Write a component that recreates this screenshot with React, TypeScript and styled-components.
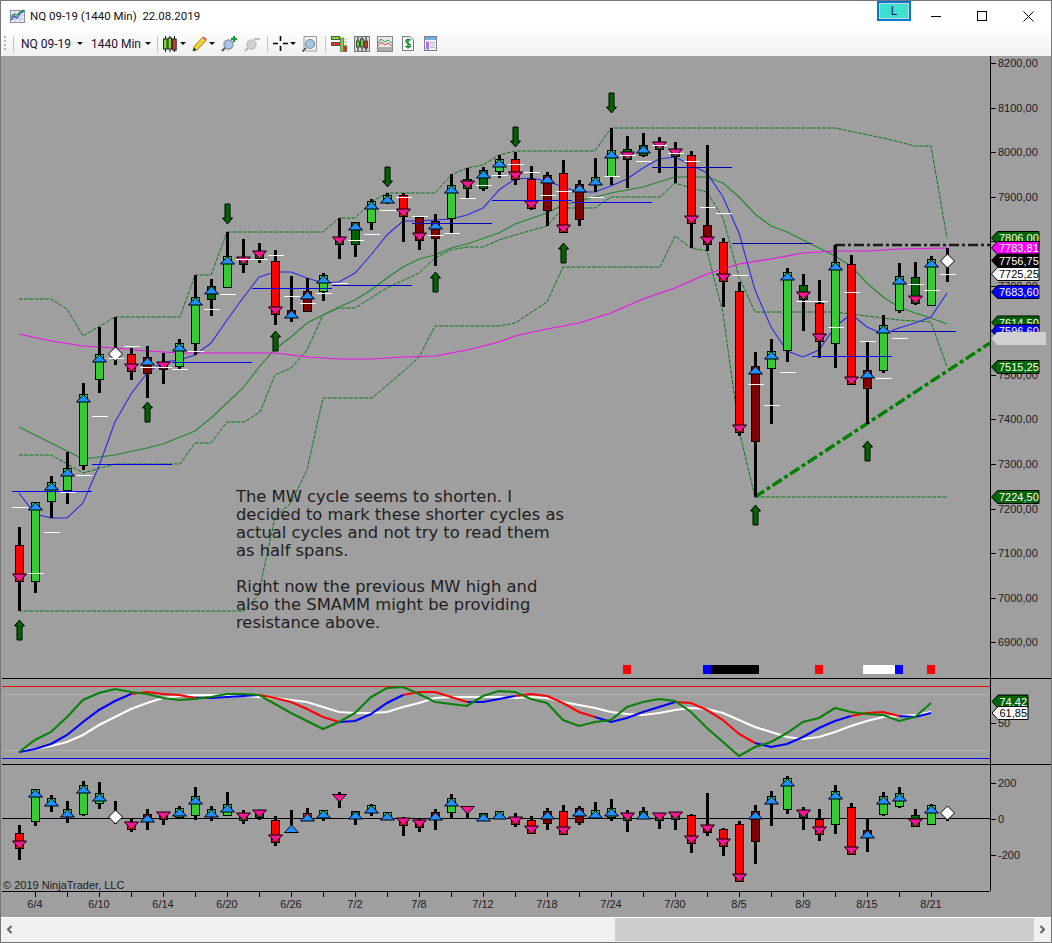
import React from "react";
import styled, { createGlobalStyle } from "styled-components";

const Global = createGlobalStyle`
  html, body { margin: 0; padding: 0; background: #fff; }
  #root { width: 1052px; height: 943px; overflow: hidden; }
`;

const Window = styled.div`
  width: 1052px; height: 943px; box-sizing: border-box;
  border: 1px solid #767676; background: #fff;
  display: flex; flex-direction: column;
  font-family: Roboto, "Noto Sans", sans-serif;
`;
const TitleBar = styled.div`
  height: 30px; display: flex; align-items: center; padding-left: 9px; background: #fff;
`;
const TitleText = styled.span`
  margin-left: 5px; font-size: 11.5px; color: #111; white-space: pre;
`;
const Spacer = styled.div`flex: 1;`;
const LinkButton = styled.div`
  width: 34px; height: 20px; box-sizing: border-box; border: 2px solid #0078d7; align-self: flex-start;
  background: #40e0d0; box-shadow: inset 0 0 0 1px #c8d8d4; display: flex; align-items: center; justify-content: center;
  font-size: 12px; color: #14206a; margin-right: 2px;
`;
const WinCtl = styled.div`
  width: 46px; height: 30px; display: flex; align-items: center; justify-content: center;
`;
const Toolbar = styled.div`
  height: 25px; display: flex; align-items: center; background: linear-gradient(#fdfdfd, #f0f0f0);
  border-bottom-left-radius: 3px; border-bottom-right-radius: 3px;
  font-size: 12px; color: #1a1030;
`;
const Grip = styled.div`
  width: 2px; height: 15px; margin-left: 3px; margin-right: 0;
  background: repeating-linear-gradient(#b5b5b5 0 2px, transparent 2px 4px);
`;
const Sep = styled.div<{ $ml: number }>`
  width: 1px; height: 16px; background: #c4c4c4; margin-left: ${(p) => p.$ml}px;
`;
const ToolLabel = styled.span<{ $ml: number; $w: number }>`
  margin-left: ${(p) => p.$ml}px; white-space: nowrap; width: ${(p) => p.$w}px;
`;
const Caret = styled.i<{ $ml: number }>`
  display: block; margin-left: ${(p) => p.$ml}px; width: 0; height: 0;
  border-left: 3px solid transparent; border-right: 3px solid transparent; border-top: 3px solid #111;
`;
const ToolIcon = styled.svg<{ $ml: number }>`
  display: block; margin-left: ${(p) => p.$ml}px; flex: none;
`;
const ChartArea = styled.div`
  height: 861px; position: relative; background: #9f9f9f; overflow: hidden;
`;
const ChartSvg = styled.svg`
  display: block; width: 1050px; height: 861px;
`;
const AxisText = styled.text`
  font-family: "Liberation Sans", Arial, sans-serif; font-size: 11px; fill: #1c1c24;
`;
const FlagText = styled.text`
  font-family: "Liberation Sans", Arial, sans-serif; font-size: 11px;
`;
const Note = styled.div`
  position: absolute; left: 235px; top: 432px; width: 345px;
  font-family: "DejaVu Sans", Verdana, sans-serif; font-size: 16.35px; line-height: 18px; color: #1e1e1e;
`;
const NoteGap = styled.div`height: 18px;`;
const ScrollGap = styled.div`height: 1px; background: #fff;`;
const ScrollBar = styled.div`
  height: 24px; background: #f0f0f0; display: flex; align-items: stretch; padding-bottom: 1px; box-sizing: border-box;
`;
const ScrollBtn = styled.div`
  width: 17px; display: flex; align-items: center; justify-content: center; flex: none;
`;
const ScrollTrack = styled.div`flex: 1; display: flex; padding-left: 597px;`;
const ScrollThumb = styled.div`flex: 1; background: #cdcdcd;`;

type Bar = [number, number, number, number, string, string];
const main: Bar[] = [
  [527,611,545,582,"r","d"],[502,593,502,582,"g","u"],[476,518,482,502,"g","u"],[452,504,468,491,"g","u"],
  [383,470,394,466,"g","u"],[327,393,354,380,"g","u"],[317,365,0,0,"","D"],[348,380,354,372,"r","d"],
  [346,398,357,374,"R","u"],[353,384,362,370,"R","d"],[339,369,343,367,"g","u"],[275,355,297,344,"g","u"],
  [279,316,286,300,"G","u"],[232,288,256,288,"g","u"],[239,273,258,265,"G","d"],[243,263,253,259,"G","d"],
  [250,325,261,315,"r","d"],[276,322,310,318,"R","u"],[278,312,291,312,"R","u"],[273,301,275,292,"g","u"],
  [218,259,237,245,"G","d"],[222,257,222,245,"G","u"],[199,230,201,223,"g","u"],[193,204,195,203,"g","u"],
  [193,242,195,217,"r","d"],[217,250,217,241,"R","d"],[214,266,221,239,"R","u"],[174,234,185,219,"g","u"],
  [168,198,179,189,"G","d"],[167,191,170,189,"G","u"],[155,178,159,172,"g","u"],[152,185,159,180,"r","d"],
  [166,210,179,209,"r","d"],[172,226,175,211,"R","u"],[160,233,173,233,"r","d"],[180,226,184,220,"R","u"],
  [158,192,177,185,"g","u"],[128,185,150,177,"g","u"],[136,188,149,160,"G","d"],[133,157,145,156,"G","u"],
  [137,173,142,150,"G","d"],[142,183,149,157,"G","d"],[151,248,155,224,"r","d"],[145,251,225,245,"R","d"],
  [238,307,242,282,"r","d"],[282,436,291,433,"r","d"],[352,497,366,442,"R","u"],[339,424,351,369,"g","u"],
  [268,362,272,351,"g","u"],[274,331,285,300,"G","d"],[280,358,303,342,"r","d"],[245,368,262,344,"g","u"],
  [255,385,264,385,"r","d"],[342,424,370,389,"R","u"],[315,373,325,371,"g","u"],[263,313,276,311,"g","u"],
  [262,305,277,304,"G","d"],[256,306,259,306,"g","u"],[248,282,0,0,"","D"],
];
const dashes = [507,573,532,492,475,416,358,346,367,367,369,351,309,294,259,259,255,296,303,293,283,240,234,210,197,216,235,233,198,185,175,164,172,195,191,0,197,176,155,161,145,153,161,207,213,275,384,405,372,301,301,327,292,341,378,338,284,290,274];
const lower: Bar[] = [
  [825,860,833,849,"r","d"],[789,826,789,822,"g","u"],[795,812,798,806,"g","u"],[801,823,809,817,"g","u"],
  [781,816,785,815,"g","u"],[782,809,793,804,"g","u"],[801,824,0,0,"","D2"],[819,832,822,830,"r","d"],
  [809,830,814,822,"R","u"],[813,825,813,820,"R","d"],[806,819,808,818,"g","u"],[787,820,796,816,"g","u"],
  [806,821,809,817,"g","u"],[792,816,804,816,"g","u"],[810,824,814,821,"G","d"],[812,820,812,818,"G","d"],
  [816,846,820,843,"r","d"],[810,825,0,0,"","u2"],[808,821,813,821,"r","u"],[810,821,810,817,"g","u"],
  [792,808,0,0,"","d2"],[811,825,811,819,"G","u"],[804,816,805,813,"g","u"],[812,820,812,819,"g","u"],
  [817,836,818,826,"r","d"],[819,832,820,828,"R","d"],[809,830,812,820,"R","u"],[794,818,798,813,"g","u"],
  [807,818,0,0,"","d3"],[813,819,813,819,"G","u"],[811,819,811,818,"g","u"],[813,827,817,825,"r","d"],
  [816,833,820,834,"r","d"],[808,830,811,824,"R","u"],[805,835,811,835,"r","d"],[806,825,808,823,"R","u"],
  [802,818,810,818,"g","u"],[799,821,808,818,"g","u"],[810,832,813,821,"G","d"],[807,819,811,819,"G","u"],
  [813,829,813,821,"G","d"],[812,830,812,820,"G","d"],[814,853,815,844,"r","d"],[793,836,826,833,"R","d"],
  [828,856,829,847,"r","d"],[821,882,824,882,"r","d"],[805,864,811,842,"R","u"],[791,826,796,803,"g","u"],
  [776,814,778,810,"g","u"],[807,830,811,818,"G","d"],[809,841,819,835,"r","d"],[785,834,791,825,"g","u"],
  [803,855,807,855,"r","d"],[818,852,830,838,"R","u"],[792,816,796,815,"g","u"],[787,808,793,807,"g","u"],
  [809,827,815,827,"G","d"],[804,825,805,825,"g","u"],[809,821,0,0,"","D3"],
];

const colors: Record<string, string> = { r: "#ff0000", g: "#32cd32", G: "#006400", R: "#800000" };
const cx = (i: number) => 19.5 + 16 * i;
const pts = (a: number[][]) => a.map((p) => p.join(",")).join(" ");

const blue = [[19,493],[35,514],[51,518],[67,518],[83,503],[99,466],[115,422],[131,394],[147,373],[163,362],[179,360],[195,355],[211,343],[227,320],[243,298],[259,277],[275,272],[291,272],[307,278],[323,283],[339,282],[355,273],[371,255],[387,235],[403,221],[419,221],[435,220],[451,219],[467,215],[483,208],[499,190],[515,179],[531,178],[547,181],[563,187],[579,192],[595,192],[611,186],[627,179],[643,168],[659,159],[675,157],[691,165],[707,173],[723,197],[739,233],[755,290],[771,327],[787,351],[803,357],[819,350],[835,327],[851,314],[867,327],[883,334],[899,328],[915,323],[931,317],[947,293]];
const magenta = [[19,334],[51,341],[83,346],[115,348],[147,351],[179,353],[211,353],[243,353],[275,353],[307,357],[339,359],[371,359],[403,357],[435,356],[467,350],[499,342],[515,336],[547,329],[579,323],[611,313],[643,299],[675,288],[707,274],[739,264],[771,259],[803,253],[835,251],[867,251],[899,249],[947,248]];
const greenSolid = [[19,427],[51,443],[83,459],[115,455],[147,448],[163,444],[195,431],[211,418],[243,388],[259,367],[275,349],[291,337],[307,323],[323,315],[339,307],[355,300],[371,290],[387,278],[403,267],[419,259],[435,255],[451,248],[467,244],[499,233],[515,224],[547,213],[563,205],[595,197],[611,193],[643,187],[675,177],[707,177],[723,183],[739,197],[755,214],[771,226],[787,232],[811,244],[835,256],[851,266],[867,283],[883,297],[899,307],[915,313],[931,318],[947,324]];
const dashUpper = [[19,299],[51,299],[67,309],[83,336],[115,317],[180,317],[195,275],[211,275],[227,232],[323,232],[339,218],[355,218],[371,202],[387,193],[403,193],[435,193],[451,175],[467,168],[483,165],[499,155],[515,151],[595,151],[611,128],[835,128],[883,138],[915,146],[931,146],[947,238]];
const dashMid = [[19,455],[51,455],[83,473],[115,464],[180,464],[195,443],[211,443],[227,422],[244,422],[260,412],[275,375],[291,368],[307,350],[323,315],[339,308],[355,308],[387,288],[419,273],[435,258],[451,250],[467,247],[483,247],[499,240],[515,235],[547,226],[563,208],[595,208],[611,197],[660,197],[675,183],[691,188],[707,192],[723,218],[739,277],[755,312],[835,312],[867,316],[899,320],[931,322],[947,367]];
const dashLow = [[19,611],[244,611],[259,594],[263,573],[275,517],[291,503],[307,470],[323,398],[372,398],[405,370],[419,357],[435,326],[499,326],[515,323],[547,302],[563,267],[660,267],[675,236],[691,248],[707,251],[723,313],[739,430],[755,497],[947,497]];
const hLines: [number, number, number, string][] = [
  [12,92,491,"#0000f0"],[92,172,464,"#0000f0"],[172,252,362,"#0000f0"],[252,332,288,"#0000e0"],[332,412,285,"#0000c0"],
  [412,492,223,"#0000c0"],[492,572,200,"#0000f0"],[572,652,202,"#0000f0"],[652,732,167,"#0000b0"],[732,812,243,"#0000a0"],
  [812,892,356,"#0000f0"],[892,956,331,"#0000b0"],
];
const whiteOsc = [[19,751],[35,749],[51,746],[67,742],[83,735],[99,725],[115,717],[131,709],[147,703],[163,698],[179,696],[195,695],[211,695],[227,696],[243,696],[259,697],[275,698],[291,700],[307,702],[323,707],[339,712],[355,713],[371,713],[387,712],[403,707],[419,703],[435,698],[451,697],[467,697],[483,697],[499,697],[515,698],[531,697],[547,698],[563,702],[579,705],[595,708],[611,712],[627,714],[643,715],[659,713],[675,710],[691,708],[707,709],[723,713],[739,720],[755,727],[771,732],[787,737],[803,739],[819,737],[835,732],[851,726],[867,721],[883,717],[899,716],[915,715],[931,712]];
const greenOsc = [[19,752],[35,740],[51,732],[67,717],[83,700],[99,693],[115,689],[131,692],[147,694],[163,698],[179,700],[195,699],[211,697],[227,694],[243,694],[259,695],[275,704],[291,713],[307,721],[323,729],[339,722],[355,713],[371,697],[387,688],[403,687],[419,694],[435,702],[451,704],[467,706],[483,696],[499,691],[515,692],[531,699],[547,703],[563,720],[579,726],[595,722],[611,720],[627,707],[643,702],[659,699],[675,701],[691,712],[707,728],[723,742],[739,756],[755,747],[771,742],[787,733],[803,722],[819,718],[835,708],[851,712],[867,714],[883,715],[899,721],[915,717],[931,703]];
const oscSegs: [string, number[][]][] = [
  ["#0000ff",[[19,752],[35,749],[51,744],[67,735],[83,722],[99,710],[115,701],[131,694]]],
  ["#ff0000",[[131,694],[147,692],[163,694],[179,695],[195,698]]],
  ["#0000ff",[[195,698],[211,698],[227,697],[243,696],[259,695]]],
  ["#ff0000",[[259,695],[275,698],[291,702],[307,709],[323,717],[339,722]]],
  ["#0000ff",[[339,722],[355,721],[371,714],[387,703],[403,695]]],
  ["#ff0000",[[403,695],[419,692],[435,692],[451,697],[467,702]]],
  ["#0000ff",[[467,702],[483,702],[499,699],[515,696]]],
  ["#ff0000",[[515,696],[531,694],[547,696],[563,703],[579,712],[595,717]]],
  ["#0000ff",[[595,717],[611,722],[627,718],[643,712],[659,707],[675,702]]],
  ["#ff0000",[[675,702],[691,703],[707,710],[723,720],[739,734],[755,743]]],
  ["#0000ff",[[755,743],[771,747],[787,744],[803,737],[819,728],[835,721],[851,716]]],
  ["#ff0000",[[851,716],[867,713],[883,712],[899,716]]],
  ["#0000ff",[[899,716],[915,717],[931,713]]],
];
const arrows: [number, number, boolean][] = [
  [227,204,false],[387,167,false],[515,127,false],[611,93,false],
  [19,620,true],[147,402,true],[275,331,true],[435,272,true],[563,243,true],[755,505,true],[867,441,true],
];

const UpTri = ({ x, y }: { x: number; y: number }) => (
  <polygon points={`${x},${y} ${x + 7},${y + 7.5} ${x - 7},${y + 7.5}`} fill="#1e90ff" stroke="#000" strokeWidth="1" />
);
const DownTri = ({ x, y }: { x: number; y: number }) => (
  <polygon points={`${x - 7},${y - 7.5} ${x + 7},${y - 7.5} ${x},${y}`} fill="#ff1493" stroke="#000" strokeWidth="1" />
);
const Diamond = ({ x, y }: { x: number; y: number }) => (
  <polygon points={`${x},${y - 7} ${x + 7},${y} ${x},${y + 7} ${x - 7},${y}`} fill="#fff" stroke="#000" strokeWidth="1" />
);

const Candle = ({ bar, i }: { bar: Bar; i: number }) => {
  const [wt, wb, bt, bb, c, m] = bar;
  const x = cx(i);
  return (
    <g>
      <rect x={x - 1.5} y={wt} width="3" height={wb - wt} fill="#000" shapeRendering="crispEdges" />
      {bt > 0 && bb > bt && (
        <rect x={x - 4} y={bt + 0.5} width="8" height={bb - bt - 1} fill={colors[c]} stroke="#000" shapeRendering="crispEdges" />
      )}
      {m === "u" && <UpTri x={x} y={bt + 0.5} />}
      {m === "d" && <DownTri x={x} y={bb - 0.5} />}
      {m === "D" && <Diamond x={x} y={i === 6 ? 354 : 261} />}
      {m === "D2" && <Diamond x={x} y={817} />}
      {m === "D3" && <Diamond x={x} y={813} />}
      {m === "u2" && <UpTri x={x} y={825} />}
      {m === "d2" && <DownTri x={x} y={802} />}
      {m === "d3" && <DownTri x={x} y={814} />}
    </g>
  );
};

const Arrow = ({ x, y, up }: { x: number; y: number; up: boolean }) => {
  const c = x + 0.5;
  const p = up
    ? `${c},${y} ${c + 5},${y + 6} ${c + 2.5},${y + 6} ${c + 2.5},${y + 20} ${c - 2.5},${y + 20} ${c - 2.5},${y + 6} ${c - 5},${y + 6}`
    : `${c - 2.5},${y} ${c + 2.5},${y} ${c + 2.5},${y + 14} ${c + 5},${y + 14} ${c},${y + 20} ${c - 5},${y + 14} ${c - 2.5},${y + 14}`;
  return <polygon points={p} fill="#006400" stroke="#000" strokeWidth="1" />;
};

const Flag = ({ y, text, bg, fg, right = 1039, tip = 991.5 }: { y: number; text: string; bg: string; fg: string; right?: number; tip?: number }) => (
  <g>
    <polygon points={`${tip},${y} ${tip + 6},${y - 6.5} ${right},${y - 6.5} ${right},${y + 6.5} ${tip + 6},${y + 6.5}`} fill={bg} stroke="#000" strokeWidth="1" />
    <FlagText x={tip + 7.5} y={y + 4} fill={fg}>{text}</FlagText>
  </g>
);

const priceY = (p: number) => 63 + ((8200 - p) / 100) * 44.55;
const prices = [8200,8100,8000,7900,7800,7700,7600,7500,7400,7300,7200,7100,7000,6900];
const dates = ["6/4","6/10","6/14","6/20","6/26","7/2","7/8","7/12","7/18","7/24","7/30","8/5","8/9","8/15","8/21"];
const markers: [number, number, string][] = [[623,8,"#f00"],[703,8,"#00f"],[711,48,"#000"],[815,8,"#f00"],[863,32,"#fff"],[895,8,"#00f"],[927,8,"#f00"]];

const Chart = () => (
  <ChartSvg viewBox="1 56 1050 861">
    {/* thin bands and averages */}
    <polyline points={pts(dashUpper)} fill="none" stroke="#0d7a18" strokeDasharray="4 1.2" />
    <polyline points={pts(dashMid)} fill="none" stroke="#0d7a18" strokeDasharray="4 1.2" />
    <polyline points={pts(dashLow)} fill="none" stroke="#0d7a18" strokeDasharray="4 1.2" />
    <polyline points={pts(greenSolid)} fill="none" stroke="#1f8a2a" strokeWidth="1.1" />
    <polyline points={pts(magenta)} fill="none" stroke="#f010e8" strokeWidth="1.2" />
    <polyline points={pts(blue)} fill="none" stroke="#2a2ae8" strokeWidth="1.1" />

    {/* reference lines */}
    <path d="M835 262V245" stroke="#000" strokeWidth="3" />
    <line x1="835" y1="245" x2="990" y2="245" stroke="#1c1c1c" strokeWidth="2.5" strokeDasharray="10 3 3 3" />
    <line x1="755" y1="497" x2="990" y2="343" stroke="#008000" strokeWidth="3.5" strokeDasharray="11 3 4 3" />

    {main.map((b, i) => <Candle key={i} bar={b} i={i} />)}
    {hLines.map(([a, b, y, c], i) => <line key={i} x1={a} x2={b} y1={y + 0.5} y2={y + 0.5} stroke={c} shapeRendering="crispEdges" />)}
    {dashes.map((y, i) => y > 0 && <line key={i} x1={12 + 16 * i} x2={28 + 16 * i} y1={y + 0.5} y2={y + 0.5} stroke="#fff" shapeRendering="crispEdges" />)}
    {arrows.map(([x, y, up], i) => <Arrow key={i} x={x} y={y} up={up} />)}
    {markers.map(([x, w, c], i) => <rect key={i} x={x} y={665} width={w} height={9} fill={c} />)}

    {/* oscillator panel */}
    <line x1="2" x2="1052" y1="678.5" y2="678.5" stroke="#000" shapeRendering="crispEdges" />
    <line x1="2" x2="990" y1="686.5" y2="686.5" stroke="#ff0000" shapeRendering="crispEdges" />
    <line x1="2" x2="990" y1="694.5" y2="694.5" stroke="#b2b2b2" shapeRendering="crispEdges" />
    <line x1="2" x2="990" y1="750.5" y2="750.5" stroke="#b2b2b2" shapeRendering="crispEdges" />
    <line x1="2" x2="990" y1="758.5" y2="758.5" stroke="#0000ff" shapeRendering="crispEdges" />
    <polyline points={pts(whiteOsc)} fill="none" stroke="#fff" strokeWidth="2.1" />
    {oscSegs.map(([c, a], i) => <polyline key={i} points={pts(a)} fill="none" stroke={c} strokeWidth="2.1" />)}
    <polyline points={pts(greenOsc)} fill="none" stroke="#0a800a" strokeWidth="2.1" />
    <line x1="2" x2="1052" y1="764.5" y2="764.5" stroke="#000" shapeRendering="crispEdges" />

    {/* lower histogram panel */}
    <line x1="2" x2="990" y1="818.5" y2="818.5" stroke="#000" shapeRendering="crispEdges" />
    {lower.map((b, i) => <Candle key={i} bar={b} i={i} />)}
    <AxisText x="3" y="889">© 2019 NinjaTrader, LLC</AxisText>

    {/* axes */}
    <line x1="990.5" x2="990.5" y1="56" y2="891" stroke="#000" shapeRendering="crispEdges" />
    <line x1="2" x2="990" y1="891.5" y2="891.5" stroke="#000" shapeRendering="crispEdges" />
    {prices.map((p) => (
      <g key={p}>
        <line x1="990" x2="996" y1={Math.round(priceY(p)) + 0.5} y2={Math.round(priceY(p)) + 0.5} stroke="#000" shapeRendering="crispEdges" />
        <AxisText x="998" y={priceY(p) + 4}>{p},00</AxisText>
      </g>
    ))}
    {[[723,"50"],[783,"200"],[819,"0"],[855,"-200"]].map(([y, t]) => (
      <g key={t as string}>
        <line x1="990" x2="996" y1={(y as number) + 0.5} y2={(y as number) + 0.5} stroke="#000" shapeRendering="crispEdges" />
        <AxisText x="998" y={(y as number) + 4}>{t}</AxisText>
      </g>
    ))}
    {Array.from({ length: 30 }, (_, k) => 35 + 32 * k).filter((x) => x < 960).map((x) => (
      <line key={x} x1={x} x2={x} y1="892" y2="897" stroke="#000" shapeRendering="crispEdges" />
    ))}
    {dates.map((d, k) => <AxisText key={d} x={35 + 64 * k} y="908" textAnchor="middle">{d}</AxisText>)}

    {/* price flags */}
    <Flag y={238} text="7806,00" bg="#006400" fg="#fff" />
    <Flag y={248} text="7783,81" bg="#ff00ff" fg="#fff" />
    <Flag y={260.5} text="7756,75" bg="#000" fg="#fff" />
    <Flag y={274} text="7725,25" bg="#fff" fg="#000" />
    <Flag y={292} text="7683,60" bg="#0000ff" fg="#fff" />
    <Flag y={322.5} text="7614,50" bg="#006400" fg="#fff" />
    <Flag y={331} text="7596,60" bg="#0000ff" fg="#fff" />
    <polygon points="991.5,338.5 997,332 1046,332 1046,345 997,345" fill="#d0d0d0" />
    <Flag y={367} text="7515,25" bg="#006400" fg="#fff" />
    <Flag y={497} text="7224,50" bg="#006400" fg="#fff" />
    <Flag y={701.5} text="74,42" bg="#006400" fg="#fff" right={1028} tip={992} />
    <Flag y={713} text="61,85" bg="#fff" fg="#000" right={1028} tip={992} />
  </ChartSvg>
);

const TitleIcon = () => (
  <svg width="15" height="15" viewBox="0 0 15 15">
    <rect x="0.5" y="1.5" width="14" height="12" fill="#e6e8f2" stroke="#8a8fa8" />
    <path d="M1 6H14M1 10H14M5 2V13M10 2V13" stroke="#c0c4d8" />
    <path d="M1 11L4 7L7 9L10 4L14 2" fill="none" stroke="#2a5bc0" strokeWidth="1.4" />
    <path d="M1 8L4 5L7 6L10 3L14 1" fill="none" stroke="#30a050" strokeWidth="1.2" />
  </svg>
);
const IconCandles = ({ $ml }: { $ml: number }) => (
  <ToolIcon $ml={$ml} width="14" height="16" viewBox="0 0 14 16">
    <path d="M2.5 0V16M7 0V16M11.5 0V16" stroke="#111" />
    <rect x="0.5" y="3" width="3.6" height="10" fill="#7edb2e" stroke="#222" />
    <rect x="5" y="2" width="3.6" height="11" fill="#7edb2e" stroke="#222" />
    <rect x="9.6" y="3" width="3.6" height="11" fill="#e8362a" stroke="#222" />
  </ToolIcon>
);
const IconPencil = ({ $ml }: { $ml: number }) => (
  <ToolIcon $ml={$ml} width="15" height="16" viewBox="0 0 15 16">
    <path d="M1 15L2 10.5L10.5 1.5L14 4.8L5.3 13.8Z" fill="#f3d03a" stroke="#8a7a20" strokeWidth="0.8" />
    <path d="M10.5 1.5L12 0.4L15 3.5L14 4.8Z" fill="#e05a6a" />
    <path d="M1 15L2 11.5L4.5 14Z" fill="#222" />
  </ToolIcon>
);
const IconZoomIn = ({ $ml }: { $ml: number }) => (
  <ToolIcon $ml={$ml} width="17" height="16" viewBox="0 0 17 16">
    <line x1="1" y1="15" x2="5" y2="11" stroke="#555" strokeWidth="2" />
    <circle cx="7.5" cy="8.5" r="4.5" fill="#a8c8ec" stroke="#8a95a5" strokeWidth="1.4" />
    <path d="M13 0V6M10 3H16" stroke="#10a030" strokeWidth="2.2" />
  </ToolIcon>
);
const IconZoomOut = ({ $ml }: { $ml: number }) => (
  <ToolIcon $ml={$ml} width="17" height="16" viewBox="0 0 17 16">
    <line x1="1" y1="15" x2="5" y2="11" stroke="#b5b5b5" strokeWidth="2" />
    <circle cx="7.5" cy="8.5" r="4.5" fill="#d2d2d2" stroke="#c2c2c2" strokeWidth="1.4" />
    <path d="M10 3H16" stroke="#bdbdbd" strokeWidth="2" />
  </ToolIcon>
);
const IconCross = ({ $ml }: { $ml: number }) => (
  <ToolIcon $ml={$ml} width="15" height="15" viewBox="0 0 15 15">
    <path d="M0 7.5H5M10 7.5H15M7.5 0V5M7.5 10V15" stroke="#000" strokeWidth="1.6" />
  </ToolIcon>
);
const IconMag = ({ $ml }: { $ml: number }) => (
  <ToolIcon $ml={$ml} width="15" height="16" viewBox="0 0 15 16">
    <path d="M2 13V0.5H14.5V15H3" fill="#f2f2f2" stroke="#9a9a9a" />
    <line x1="0.5" y1="15.5" x2="4" y2="12" stroke="#444" strokeWidth="1.6" />
    <circle cx="8" cy="8" r="4.5" fill="#a5c5e8" stroke="#7f8ea0" strokeWidth="1.2" />
  </ToolIcon>
);
const IconBars = ({ $ml }: { $ml: number }) => (
  <ToolIcon $ml={$ml} width="16" height="16" viewBox="0 0 16 16">
    <path d="M11 3H16M11 6H16M11 9H16M12 12H16" stroke="#bbb" />
    <rect x="0.5" y="0.5" width="8" height="3" fill="#7edb2e" stroke="#555" />
    <rect x="0.5" y="6.5" width="8" height="3" fill="#e0302a" stroke="#555" />
    <rect x="9.5" y="2" width="3" height="13.5" fill="#7edb2e" stroke="#555" strokeWidth="0.7" />
    <rect x="13" y="10" width="3" height="5.5" fill="#e0302a" stroke="#555" strokeWidth="0.7" />
  </ToolIcon>
);
const IconBox = ({ $ml }: { $ml: number }) => (
  <ToolIcon $ml={$ml} width="16" height="16" viewBox="0 0 16 16">
    <rect x="0.5" y="0.5" width="15" height="15" fill="#d8d8d8" stroke="#777" />
    <path d="M4 1V15M8 1V15M12 1V15" stroke="#222" />
    <rect x="2.5" y="5" width="3" height="6" fill="#60d030" stroke="#222" strokeWidth="0.7" />
    <rect x="6.5" y="3" width="3" height="8" fill="#60d030" stroke="#222" strokeWidth="0.7" />
    <rect x="10.5" y="5" width="3" height="7" fill="#e0302a" stroke="#222" strokeWidth="0.7" />
  </ToolIcon>
);
const IconLines = ({ $ml }: { $ml: number }) => (
  <ToolIcon $ml={$ml} width="16" height="16" viewBox="0 0 16 16">
    <rect x="0.5" y="0.5" width="15" height="15" fill="#e8eae8" stroke="#888" />
    <rect x="1" y="11" width="14" height="4" fill="#aaa" />
    <path d="M1 7L4 3L8 6L11 4L15 7" fill="none" stroke="#2aa050" />
    <path d="M1 10L4 6L8 9L11 7L15 10" fill="none" stroke="#d04040" />
  </ToolIcon>
);
const IconDollar = ({ $ml }: { $ml: number }) => (
  <ToolIcon $ml={$ml} width="12" height="15" viewBox="0 0 12 15">
    <path d="M0.5 0.5H8L11.5 4V14.5H0.5Z" fill="#fdfdfd" stroke="#777" />
    <path d="M8.5 4.5C8 3.2 4 3 4 5.5C4 8 8.5 6.8 8.5 9.5C8.5 12 4.2 11.5 3.5 10.2M6 2.5V12.5" fill="none" stroke="#1a8a30" strokeWidth="1.5" />
  </ToolIcon>
);
const IconForm = ({ $ml }: { $ml: number }) => (
  <ToolIcon $ml={$ml} width="13" height="15" viewBox="0 0 13 15">
    <rect x="0.5" y="0.5" width="12" height="14" fill="#f0f2f8" stroke="#7a7f90" />
    <rect x="1" y="1" width="11" height="3" fill="#6fb0e0" />
    <rect x="2" y="5.5" width="3" height="8" fill="#b070f0" />
    <path d="M6 6.5H11M6 9H11M6 11.5H11" stroke="#b0b4c4" />
  </ToolIcon>
);

export default function App() {
  return (
    <>
      <Global />
      <Window>
        <TitleBar>
          <TitleIcon />
          <TitleText>NQ 09-19 (1440 Min)  22.08.2019</TitleText>
          <Spacer />
          <LinkButton>L</LinkButton>
          <WinCtl><svg width="10" height="10"><path d="M0 5.5H10" stroke="#000" /></svg></WinCtl>
          <WinCtl><svg width="10" height="10"><rect x="0.5" y="0.5" width="9" height="9" fill="none" stroke="#000" /></svg></WinCtl>
          <WinCtl><svg width="11" height="11"><path d="M0.5 0.5L10.5 10.5M10.5 0.5L0.5 10.5" stroke="#000" /></svg></WinCtl>
        </TitleBar>
        <Toolbar>
          <Grip />
          <Sep $ml={7} />
          <ToolLabel $ml={7} $w={50}>NQ 09-19</ToolLabel>
          <Caret $ml={6} />
          <ToolLabel $ml={8} $w={48}>1440 Min</ToolLabel>
          <Caret $ml={6} />
          <Sep $ml={6} />
          <IconCandles $ml={5} />
          <Caret $ml={3} />
          <IconPencil $ml={6} />
          <Caret $ml={2} />
          <IconZoomIn $ml={6} />
          <IconZoomOut $ml={6} />
          <Sep $ml={6} />
          <IconCross $ml={5} />
          <Caret $ml={2} />
          <IconMag $ml={6} />
          <Sep $ml={8} />
          <IconBars $ml={5} />
          <IconBox $ml={7} />
          <IconLines $ml={7} />
          <IconDollar $ml={9} />
          <IconForm $ml={10} />
        </Toolbar>
        <ChartArea>
          <Chart />
          <Note>
            The MW cycle seems to shorten. I<br />
            decided to mark these shorter cycles as<br />
            actual cycles and not try to read them<br />
            as half spans.
            <NoteGap />
            Right now the previous MW high and<br />
            also the SMAMM might be providing<br />
            resistance above.
          </Note>
        </ChartArea>
        <ScrollGap />
        <ScrollBar>
          <ScrollBtn><svg width="7" height="9"><path d="M5.5 1L2 4.5L5.5 8" fill="none" stroke="#606060" strokeWidth="2" /></svg></ScrollBtn>
          <ScrollTrack><ScrollThumb /></ScrollTrack>
          <ScrollBtn><svg width="7" height="9"><path d="M1.5 1L5 4.5L1.5 8" fill="none" stroke="#606060" strokeWidth="2" /></svg></ScrollBtn>
        </ScrollBar>
      </Window>
    </>
  );
}
